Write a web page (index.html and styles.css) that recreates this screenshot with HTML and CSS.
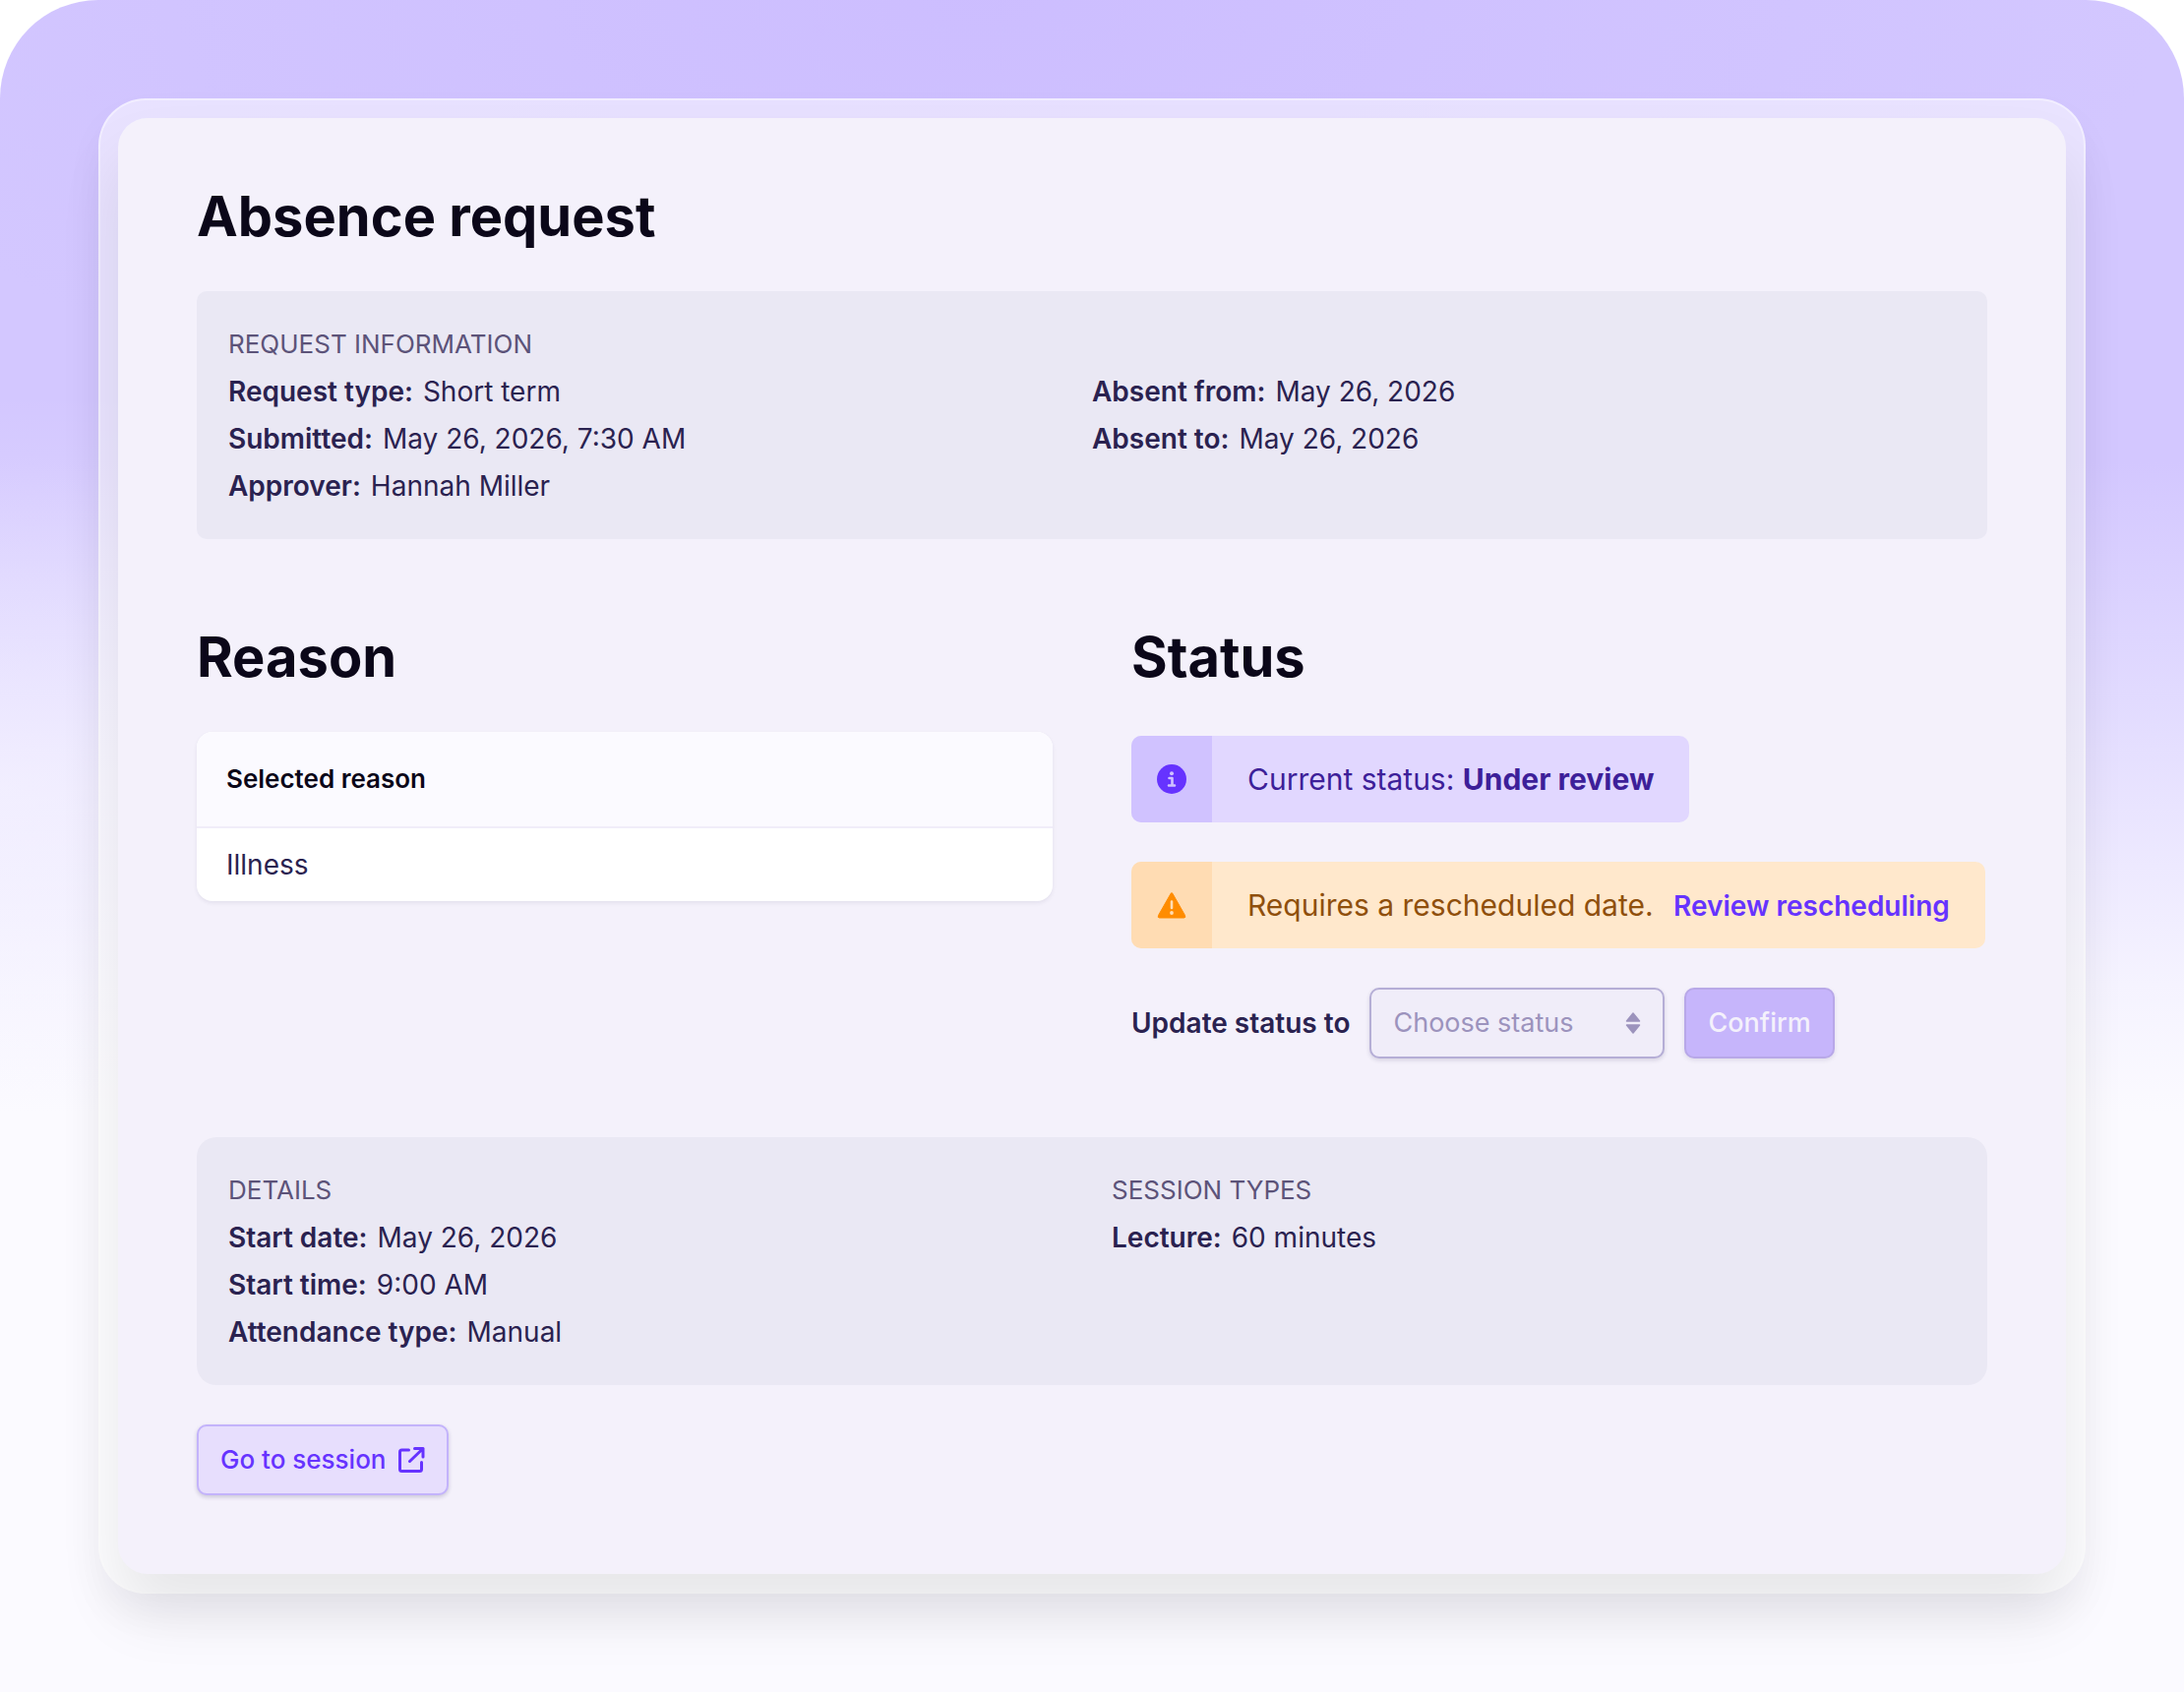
FILE: index.html
```
<!DOCTYPE html>
<html lang="en">
<head>
  <meta charset="UTF-8" />
  <meta name="viewport" content="width=device-width, initial-scale=1.0" />
  <title>Absence request</title>
  <link rel="stylesheet" href="styles.css">
</head>
<body>
  <div class="backdrop">
    <div class="frame">
      <main class="panel">
        <h1 class="heading">Absence request</h1>

        <section class="info-box request-info">
          <h2 class="info-title">Request information</h2>
          <div class="info-columns">
            <dl class="info-list">
              <div class="info-row"><dt>Request type:</dt><dd>Short term</dd></div>
              <div class="info-row"><dt>Submitted:</dt><dd>May 26, 2026, 7:30 AM</dd></div>
              <div class="info-row"><dt>Approver:</dt><dd>Hannah Miller</dd></div>
            </dl>
            <dl class="info-list">
              <div class="info-row"><dt>Absent from:</dt><dd>May 26, 2026</dd></div>
              <div class="info-row"><dt>Absent to:</dt><dd>May 26, 2026</dd></div>
            </dl>
          </div>
        </section>

        <div class="columns">
          <section class="column">
            <h2 class="heading">Reason</h2>
            <table class="reason-table">
              <thead>
                <tr><th scope="col">Selected reason</th></tr>
              </thead>
              <tbody>
                <tr><td>Illness</td></tr>
              </tbody>
            </table>
          </section>

          <section class="column">
            <h2 class="heading">Status</h2>
            <div class="status-stack">
              <div class="alert alert-info">
                <div class="alert-icon">
                  <svg width="32" height="32" viewBox="0 0 32 32" aria-hidden="true">
                    <circle cx="16" cy="16" r="15" fill="#6633ff" />
                    <circle cx="16" cy="10.3" r="2" fill="#d0c2ff" />
                    <path d="M13.5 15h3v7.3M13 22.5h6" fill="none" stroke="#d0c2ff" stroke-width="2.6" stroke-linecap="round" stroke-linejoin="round" />
                  </svg>
                </div>
                <p class="alert-text">Current status: <strong>Under review</strong></p>
              </div>
              <div class="alert alert-warning">
                <div class="alert-icon">
                  <svg width="32" height="32" viewBox="0 0 32 32" aria-hidden="true">
                    <path d="M15.2 4.2Q16 3 16.8 4.2L29.5 26.5Q30.5 29 28.5 29H3.5Q1.5 29 2.5 26.5Z" fill="#ff8c00" stroke="#ff8c00" stroke-width="1" stroke-linejoin="round" />
                    <path d="M16 12.5V19" fill="none" stroke="#ffdcb3" stroke-width="2.6" stroke-linecap="round" />
                    <circle cx="16" cy="24" r="1.9" fill="#ffdcb3" />
                  </svg>
                </div>
                <p class="alert-text">Requires a rescheduled date. <a class="alert-link" href="#">Review rescheduling</a></p>
              </div>
              <form class="status-form">
                <label class="status-label" for="status">Update status to</label>
                <div class="select-wrap">
                  <select class="status-select" id="status">
                    <option>Choose status</option>
                    <option>Under review</option>
                    <option>Approved</option>
                    <option>Rejected</option>
                  </select>
                  <svg class="select-arrows" width="16" height="24" viewBox="0 0 16 24" aria-hidden="true">
                    <path d="M8 2L14.5 10H1.5ZM8 22L1.5 14H14.5Z" fill="#9c93bd" stroke="#9c93bd" stroke-width="1.5" stroke-linejoin="round" />
                  </svg>
                </div>
                <button class="btn btn-confirm" type="button" disabled>Confirm</button>
              </form>
            </div>
          </section>
        </div>

        <section class="info-box session-info">
          <div class="info-columns">
            <div>
              <h2 class="info-title">Details</h2>
              <dl class="info-list">
                <div class="info-row"><dt>Start date:</dt><dd>May 26, 2026</dd></div>
                <div class="info-row"><dt>Start time:</dt><dd>9:00 AM</dd></div>
                <div class="info-row"><dt>Attendance type:</dt><dd>Manual</dd></div>
              </dl>
            </div>
            <div>
              <h2 class="info-title">Session types</h2>
              <dl class="info-list">
                <div class="info-row"><dt>Lecture:</dt><dd>60 minutes</dd></div>
              </dl>
            </div>
          </div>
        </section>

        <a class="btn btn-session" href="#">
          Go to session
          <svg width="28" height="28" viewBox="0 0 28 28" fill="none" stroke="#6633ff" stroke-width="3" stroke-linecap="round" stroke-linejoin="round" aria-hidden="true">
            <path d="M11.5 4H4.5Q2.5 4 2.5 6V23.5Q2.5 25.5 4.5 25.5H22.5Q24.5 25.5 24.5 23.5V16.5" />
            <path d="M17.5 2.5H26V11M26 2.5L12.5 15.5" />
          </svg>
        </a>
      </main>
    </div>
  </div>
</body>
</html>
```
FILE: styles.css
```
* {
  box-sizing: border-box;
}
body {
  margin: 0;
  font-family: Inter, 'Liberation Sans', sans-serif;
  font-size: 28px;
  line-height: 48px;
  color: #2a2250;
  background: #fff;
}
h1, h2, p, dl, dd {
  margin: 0;
}
.backdrop {
  min-height: 100vh;
  padding: 100px;
  border-radius: 100px 100px 0 0;
  background:
    radial-gradient(1000px 400px at 0 800px, rgba(251, 250, 255, 0.5), rgba(251, 250, 255, 0)),
    radial-gradient(1200px 500px at 45% 0, rgba(198, 180, 255, 0.5), rgba(198, 180, 255, 0)),
    linear-gradient(180deg, #d3c7ff 0, #d3c7ff 470px, #e1daff 700px, #f5f3ff 1000px, #fbfaff 1130px);
}
.frame {
  padding: 18px;
  border: 2px solid rgba(255, 255, 255, 0.4);
  border-radius: 48px;
  background: rgba(255, 255, 255, 0.5);
  box-shadow: 0 20px 40px rgba(20, 10, 60, 0.04);
}
.panel {
  padding: 60px 80px 80px;
  border-radius: 30px;
  background: #f4f1fb;
  box-shadow: 0 40px 64px rgba(0, 0, 0, 0.09);
}
.heading {
  font-size: 56px;
  font-weight: 700;
  line-height: 80px;
  color: #0b0719;
}

/* info boxes */
.info-box {
  padding: 30px 32px;
  background: #eae8f4;
}
.request-info {
  margin-top: 36px;
  border-radius: 10px;
}
.session-info {
  margin-top: 80px;
  border-radius: 20px;
}
.info-title {
  font-size: 26px;
  font-weight: 400;
  text-transform: uppercase;
  color: #5c5379;
}
.info-columns {
  display: grid;
  grid-template-columns: 1fr 1fr;
}
.session-info .info-columns {
  gap: 40px;
}
.info-row {
  display: flex;
  gap: 10px;
}
.info-row dt {
  font-weight: 600;
}

/* reason and status */
.columns {
  display: grid;
  grid-template-columns: 1fr 1fr;
  gap: 80px;
  margin-top: 80px;
}
.reason-table {
  width: 100%;
  margin-top: 36px;
  border-collapse: separate;
  border-spacing: 0;
  border-radius: 16px;
  overflow: hidden;
  background: #fff;
  box-shadow: 0 2px 4px rgba(42, 34, 80, 0.08);
}
.reason-table th {
  padding: 24px 30px;
  border-bottom: 2px solid #f0edf9;
  background: #fbfaff;
  font-size: 26px;
  font-weight: 600;
  text-align: left;
  color: #0b0719;
}
.reason-table td {
  padding: 13px 30px;
}
.status-stack {
  display: flex;
  flex-direction: column;
  align-items: flex-start;
  gap: 40px;
  margin-top: 40px;
}
.alert {
  display: flex;
  border-radius: 10px;
  overflow: hidden;
}
.alert-icon {
  display: flex;
  flex: none;
  align-items: center;
  justify-content: center;
  width: 82px;
}
.alert-text {
  padding: 20px 36px;
  font-size: 30px;
}
.alert-info {
  background: #e1d7ff;
  color: #3d1f99;
}
.alert-info .alert-icon {
  background: #d0c2ff;
}
.alert-warning {
  background: #ffe8cc;
  color: #8f4f0c;
}
.alert-warning .alert-icon {
  background: #ffdcb3;
}
.alert-link {
  margin-left: 12px;
  font-size: 28px;
  font-weight: 600;
  line-height: 1;
  color: #6633ff;
  text-decoration: none;
}
.status-form {
  display: flex;
  align-items: center;
  gap: 20px;
}
.status-label {
  font-weight: 600;
}
.select-wrap {
  position: relative;
}
.status-select {
  display: block;
  width: 300px;
  height: 72px;
  padding: 0 22px;
  border: 2px solid #b5aed6;
  border-radius: 10px;
  appearance: none;
  background: #f0edf9;
  box-shadow: 0 2px 4px rgba(42, 34, 80, 0.15);
  font: inherit;
  font-size: 27px;
  color: #9c93bd;
}
.select-arrows {
  position: absolute;
  top: 24px;
  right: 24px;
  pointer-events: none;
}

/* buttons */
.btn {
  display: inline-flex;
  align-items: center;
  gap: 12px;
  height: 72px;
  padding: 0 22px;
  border: 2px solid #c3b3fb;
  border-radius: 10px;
  box-shadow: 0 2px 4px rgba(42, 34, 80, 0.2);
  font: inherit;
  font-size: 27px;
  font-weight: 500;
  text-decoration: none;
}
.btn-confirm {
  border-color: #b8a8e8;
  background: #c6b5fb;
  box-shadow: 0 2px 4px rgba(42, 34, 80, 0.1);
  color: #f4f1fb;
}
.btn-session {
  margin-top: 40px;
  background: #e7defd;
  font-size: 26px;
  color: #6633ff;
}
```
